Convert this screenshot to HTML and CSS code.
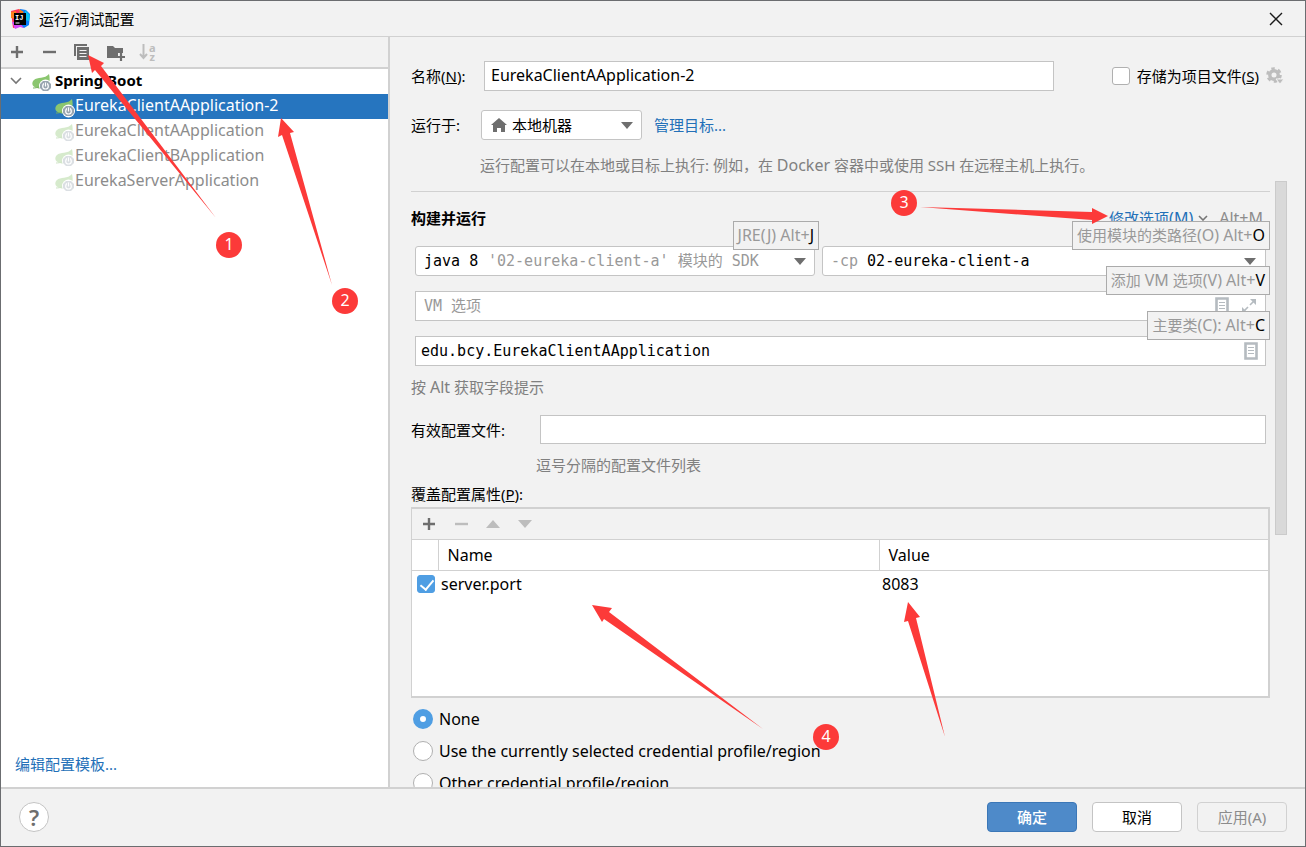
FILE: index.html
```html
<!DOCTYPE html>
<html lang="zh-CN">
<head>
<meta charset="utf-8">
<title>运行/调试配置</title>
<link rel="stylesheet" href="styles.css">
</head>
<body>
<svg class="defs" aria-hidden="true">
  <symbol id="plus" viewBox="0 0 16 16"><path d="M8 2v12M2 8h12" stroke="currentColor" stroke-width="2.4"/></symbol>
  <symbol id="minus" viewBox="0 0 16 16"><path d="M2 8h13" stroke="currentColor" stroke-width="2.4"/></symbol>
  <symbol id="down" viewBox="0 0 12 8"><path d="M0 1h12L6 8z" fill="currentColor"/></symbol>
  <symbol id="doc" viewBox="0 0 14 18"><path d="M1.500 1.500h11v15h-11z" fill="#fff" stroke="#b5bbc0" stroke-width="2.600"/><path d="M4 5.500h6M4 8.500h6M4 11.500h6" stroke="#b5bbc0"/></symbol>
  <symbol id="spring" viewBox="0 0 20 20">
    <path d="M17 1c1 4 1 8-1 11-3 4-8 4-11 3-5-1-6-5-3-8 3-3 11-1 15-6z" fill="#8bc66f"/>
    <path d="M1 15c5 0 9-2 12-6" fill="none" stroke="#79b25e"/>
    <circle class="cut" cx="13.500" cy="13" r="6.500"/>
    <path d="M11 8h5l3 3v4l-3 3h-5l-3-3v-4z" fill="#99a5b0"/>
    <circle cx="13.500" cy="13.200" r="2.800" fill="none" stroke="#fff" stroke-width="1.200"/>
    <path d="M13.500 10v3" stroke="#99a5b0" stroke-width="3"/><path d="M13.500 9.500v4" stroke="#fff" stroke-width="1.200"/>
  </symbol>
</svg>

<div class="dialog">
  <header class="titlebar">
    <svg class="logo" viewBox="0 0 20 20" aria-hidden="true">
      <path d="M1 2l8-2 4 5-5 13-5 1z" fill="#fe315d"/><path d="M1 3l5-1v8l-5-1z" fill="#fc801d"/>
      <path d="M10 0l6 1 4 4-1 11-5 3-6-3z" fill="#087cfa"/><path d="M15 1l5 5-1 6-4-1z" fill="#07c3f2"/>
      <path d="M2 13h7l5 6-4-1-5 2z" fill="#d249fc"/><path d="M9 0l5 3-4 3z" fill="#f97a12"/>
      <path d="M4 4h12v12H4z" fill="#000"/><path d="M5.500 14h4" stroke="#fff"/>
      <text x="5" y="10.500" class="logo-text">IJ</text>
    </svg>
    <h1>运行/调试配置</h1>
    <button class="icon-btn close" aria-label="关闭"><svg width="14" height="14" viewBox="0 0 14 14"><path d="M1 1l12 12M13 1L1 13" stroke="#1a1a1a" stroke-width="1.400"/></svg></button>
  </header>

  <div class="body">
    <aside class="sidebar">
      <div class="toolbar">
        <button class="icon-btn" aria-label="添加"><svg width="16" height="16"><use href="#plus"/></svg></button>
        <button class="icon-btn" aria-label="删除"><svg width="16" height="16"><use href="#minus"/></svg></button>
        <button class="icon-btn" aria-label="复制"><svg width="18" height="18" viewBox="0 0 18 18"><path d="M2 13V2h12" fill="none" stroke="#6e6e6e" stroke-width="2"/><path d="M4 4h12v13H4z" fill="#6e6e6e"/><path d="M6.500 7.500h7M6.500 10.500h7M6.500 13.500h7" stroke="#f2f2f2"/></svg></button>
        <button class="icon-btn" aria-label="新建文件夹"><svg width="18" height="18" viewBox="0 0 18 18"><path d="M0 3h6l2 2h8v5h-5v5H0z" fill="#6e6e6e"/><path d="M14 10v8M10 14h8" stroke="#6e6e6e" stroke-width="2.200"/></svg></button>
        <button class="icon-btn sort" aria-label="排序" disabled><svg width="9" height="18" viewBox="0 0 9 18"><path d="M4.500 1v14M1 11l3.500 4L8 11" fill="none" stroke="#bdbdbd" stroke-width="2"/></svg><span class="az"><span>a</span><span>z</span></span></button>
      </div>
      <ul class="tree">
        <li class="group"><svg class="chevron" width="12" height="8" viewBox="0 0 12 8"><path d="M1 1l5 5 5-5" fill="none" stroke="#767676" stroke-width="1.600"/></svg><svg class="spring"><use href="#spring"/></svg>Spring Boot</li>
        <li class="item selected"><svg class="spring"><use href="#spring"/></svg>EurekaClientAApplication-2</li>
        <li class="item dim"><svg class="spring"><use href="#spring"/></svg>EurekaClientAApplication</li>
        <li class="item dim"><svg class="spring"><use href="#spring"/></svg>EurekaClientBApplication</li>
        <li class="item dim"><svg class="spring"><use href="#spring"/></svg>EurekaServerApplication</li>
      </ul>
      <a class="templates" href="#">编辑配置模板...</a>
    </aside>

    <main class="main">
      <div class="row name-row">
        <label class="lead" for="name">名称(<u>N</u>):</label>
        <input class="field name latin" id="name" type="text" value="EurekaClientAApplication-2">
        <div class="store">
          <input type="checkbox" class="check" id="store"><label for="store">存储为项目文件(<u>S</u>)</label>
          <button class="icon-btn" aria-label="设置"><svg width="18" height="18" viewBox="0 0 18 18"><circle cx="8" cy="8" r="4.200" fill="none" stroke="#bdbdbd" stroke-width="3.400"/><circle cx="8" cy="8" r="6.500" fill="none" stroke="#bdbdbd" stroke-width="2.600" stroke-dasharray="3.400 3.400"/><path d="M10 12h8l-4 5z" fill="#bdbdbd" stroke="#f2f2f2"/></svg></button>
        </div>
      </div>
      <div class="row target-row">
        <label class="lead" for="target">运行于:</label>
        <div class="combo target">
          <svg width="18" height="16" viewBox="0 0 18 16"><path d="M9 1l8 7h-2v7h-4v-4H7v4H3V8H1z" fill="#6e6e6e"/></svg>
          <select id="target"><option>本地机器</option></select>
          <svg class="arrow"><use href="#down"/></svg>
        </div>
        <a href="#">管理目标...</a>
      </div>
      <p class="hint target-hint">运行配置可以在本地或目标上执行: 例如，在 <span class="latin">Docker</span> 容器中或使用 SSH 在远程主机上执行。</p>

      <div class="scroll">
        <div class="content">
          <div class="section-head">
            <h2>构建并运行</h2>
            <div class="modify"><a href="#">修改选项<span class="latin">(M)</span></a><svg width="10" height="6" viewBox="0 0 10 6"><path d="M1 1l4 4 4-4" fill="none" stroke="#767676" stroke-width="1.600"/></svg><span class="keys latin">Alt+M</span></div>
          </div>
          <div class="build">
            <div class="combo mono jre">
              <select aria-label="JRE"><option>java 8</option></select><span class="gray">'02-eureka-client-a' 模块的 SDK</span>
              <svg class="arrow"><use href="#down"/></svg>
              <span class="tip"><span class="latin">JRE(J) Alt+<b>J</b></span></span>
            </div>
            <div class="combo mono cp">
              <label class="gray" for="cp">-cp</label><select id="cp"><option>02-eureka-client-a</option></select>
              <svg class="arrow"><use href="#down"/></svg>
              <span class="tip">使用模块的类路径<span class="latin">(O) Alt+<b>O</b></span></span>
            </div>
            <div class="box mono wide">
              <input type="text" placeholder="VM 选项" aria-label="VM 选项">
              <svg width="14" height="18"><use href="#doc"/></svg>
              <svg width="16" height="16" viewBox="0 0 16 16"><path d="M9 7l5-5M7 9l-5 5" stroke="#b5bbc0" stroke-width="1.600"/><path d="M9 1h6v6zM1 9v6h6z" fill="#b5bbc0"/></svg>
              <span class="tip">添加 <span class="latin">VM</span> 选项<span class="latin">(V) Alt+<b>V</b></span></span>
            </div>
            <div class="box mono wide class-box">
              <input type="text" value="edu.bcy.EurekaClientAApplication" aria-label="主要类">
              <svg width="14" height="18"><use href="#doc"/></svg>
              <span class="tip">主要类<span class="latin">(C): Alt+<b>C</b></span></span>
            </div>
          </div>
          <p class="hint alt-hint">按 <span class="latin">Alt</span> 获取字段提示</p>
          <div class="row profiles">
            <label for="profiles">有效配置文件:</label><input class="field" id="profiles" type="text">
          </div>
          <p class="hint profile-hint">逗号分隔的配置文件列表</p>
          <p class="props-label">覆盖配置属性(<u>P</u>):</p>
          <div class="props">
            <div class="props-bar">
              <button class="icon-btn" aria-label="添加属性"><svg width="16" height="16"><use href="#plus"/></svg></button>
              <button class="icon-btn faint" aria-label="删除属性"><svg width="16" height="16"><use href="#minus"/></svg></button>
              <button class="icon-btn faint" aria-label="上移"><svg width="16" height="8" viewBox="0 0 16 8"><path d="M1 8h14L8 0z" fill="currentColor"/></svg></button>
              <button class="icon-btn faint" aria-label="下移"><svg width="16" height="8" viewBox="0 0 16 8"><path d="M1 0h14L8 8z" fill="currentColor"/></svg></button>
            </div>
            <table>
              <thead><tr><th class="tick"></th><th class="key">Name</th><th>Value</th></tr></thead>
              <tbody><tr><td class="tick"><input type="checkbox" class="check" checked aria-label="server.port"></td><td>server.port</td><td>8083</td></tr></tbody>
            </table>
          </div>
          <div class="radios">
            <label><input type="radio" name="cred" checked>None</label>
            <label><input type="radio" name="cred">Use the currently selected credential profile/region</label>
            <label><input type="radio" name="cred">Other credential profile/region</label>
          </div>
        </div>
        <div class="thumb"></div>
      </div>
    </main>
  </div>

  <footer class="footer">
    <button class="help" aria-label="帮助">?</button>
    <button class="btn primary">确定</button>
    <button class="btn">取消</button>
    <button class="btn" disabled>应用(A)</button>
  </footer>
</div>

<svg class="marks" width="1306" height="847" viewBox="0 0 1306 847" aria-hidden="true">
  <g fill="#fc3a39">
    <path d="M88 55L104 63L101 66L216 218L95 70L92 73z"/>
    <path d="M281 118L294 132L290 133L332 285L282 135L278 137z"/>
    <path d="M1108 216L1092 208V212L920 207L1092 220V224z"/>
    <path d="M592 605L612 608L609 612L763 729L604 619L602 622z"/>
    <path d="M908 602L920 617L916 618L945 737L908 621L904 622z"/>
    <circle cx="229" cy="245" r="13"/><circle cx="345" cy="301" r="13"/><circle cx="904" cy="203" r="13"/><circle cx="826" cy="737" r="13"/>
  </g>
  <g class="mark-num"><text x="229" y="250">1</text><text x="345" y="306">2</text><text x="904" y="208">3</text><text x="826" y="742">4</text></g>
</svg>
</body>
</html>
```
FILE: styles.css
```css
* { box-sizing: border-box; }
body, h1, h2, p, ul { margin: 0; padding: 0; }
body, input, select, button {
  font-family: "Noto Sans", "Noto Sans CJK SC", sans-serif;
  font-size: 15px;
  line-height: 20px;
  color: #000;
}
a { color: #2370b8; text-decoration: none; }
button { padding: 0; cursor: pointer; }
svg { flex: none; display: block; }
.defs { position: absolute; width: 0; height: 0; }
.latin, .tree, table, .radios { font-size: 16px; }
.hint, .modify a, .tip { line-height: 20px; }
.hint .latin, .modify .latin, .tip .latin { line-height: 16px; }

.dialog {
  display: flex;
  flex-direction: column;
  height: 100vh;
  background: #f2f2f2;
  border: 1px solid #6b6d70;
}
.titlebar {
  display: flex;
  align-items: center;
  gap: 9px;
  height: 36px;
  padding: 0 22px 0 9px;
  border-bottom: 1px solid #d1d1d1;
}
.titlebar h1 { font-size: 15px; font-weight: 400; }
.logo { width: 20px; height: 20px; }
.logo-text { font: 700 7px "Liberation Mono", monospace; fill: #fff; }
.icon-btn { display: flex; background: none; border: 0; color: #6e6e6e; }
.icon-btn.faint { color: #bdbdbd; }
.az { display: flex; flex-direction: column; font-size: 11px; font-weight: 700; line-height: 9px; color: #bdbdbd; }
.close { margin-left: auto; }

.body { flex: 1; display: flex; min-height: 0; }
.sidebar {
  display: flex;
  flex-direction: column;
  width: 389px;
  background: #fff;
  border-right: 2px solid #d1d1d1;
}
.toolbar {
  display: flex;
  align-items: center;
  gap: 16px;
  height: 32px;
  padding: 0 8px;
  background: #f2f2f2;
  border-bottom: 2px solid #d1d1d1;
}
.sort { gap: 1px; margin-left: -2px; }
.tree { list-style: none; flex: 1; line-height: 22px; }
.tree li { display: flex; align-items: flex-start; height: 25px; white-space: nowrap; }
.group { padding-left: 9px; font-weight: 700; font-size: 15px; }
.chevron { margin: 8px 10px 0 0; }
.spring { width: 20px; height: 20px; margin-top: 4px; }
.group .spring { margin-right: 3px; }
.cut { fill: #fff; }
.item { padding-left: 54px; }
.item.dim { color: #8c8c8c; }
.item.dim .spring { opacity: 0.35; }
.item.selected { background: #2675bf; color: #fff; }
.item.selected .cut { fill: #2675bf; }
.templates { padding: 0 14px 13px; }

.main { flex: 1; display: flex; flex-direction: column; min-width: 0; padding: 24px 18px 0 21px; }
.row { display: flex; align-items: center; }
.lead { width: 70px; }
.field {
  height: 30px;
  padding: 0 6px 2px;
  background: #fff;
  border: 1px solid #c4c4c4;
  outline: 0;
}
.name { flex: 1; min-width: 0; margin-left: 3px; }
.store { display: flex; align-items: center; gap: 7px; margin-left: 58px; margin-right: 3px; }
.check {
  appearance: none;
  width: 18px;
  height: 18px;
  margin: 0;
  background: #fff;
  border: 1px solid #b0b0b0;
  border-radius: 3px;
}
.check:checked { background: #4f9ee3; border-color: #4f9ee3; }
.check:checked::after {
  content: "";
  display: block;
  width: 6px;
  height: 11px;
  margin: 1px 5px;
  border: solid #fff;
  border-width: 0 2px 2px 0;
  transform: rotate(40deg);
}
.target-row { margin-top: 19px; }
.combo, .box {
  position: relative;
  display: flex;
  align-items: center;
  height: 30px;
  background: #fff;
  border: 1px solid #c4c4c4;
}
.combo { padding: 0 8px; border-radius: 3px; }
.combo select {
  appearance: none;
  padding: 0;
  background: none;
  border: 0;
  outline: 0;
}
.arrow { width: 12px; height: 8px; margin-left: auto; color: #6e6e6e; }
.target { width: 161px; gap: 4px; margin-right: 12px; }
.hint { color: #808080; white-space: nowrap; }
.target-hint { margin: 15px 0 16px 69px; }

.scroll { flex: 1; display: flex; min-height: 0; margin-top: -10px; padding-top: 10px; overflow: hidden; }
.content { flex: 1; min-width: 0; border-top: 1px solid #d1d1d1; }
.thumb { width: 12px; height: 354px; margin: -10px 0 0 5px; background: #d9d9d9; border: 1px solid #cbcbcb; }
.section-head { display: flex; justify-content: space-between; align-items: center; padding: 16px 7px 18px 0; }
.section-head h2 { font-size: 15px; font-weight: 700; }
.modify { display: flex; align-items: center; gap: 5px; color: #8c8c8c; }
.keys { margin-left: 6px; }
.build { display: grid; grid-template-columns: 400px 1fr; gap: 15px 7px; padding: 0 4px; }
.wide { grid-column: 1 / -1; }
.mono, .mono input, .mono select { font-family: "DejaVu Sans Mono", "Noto Sans CJK SC", monospace; }
.gray { color: #999; white-space: nowrap; }
.jre, .cp { gap: 9px; }
.cp .arrow { margin-right: 1px; }
.box { padding: 0 8px; gap: 12px; }
.box input { flex: 1; min-width: 0; padding: 0; border: 0; outline: 0; background: none; }
.box input::placeholder { color: #999; }
.class-box { padding: 0 7px 0 5px; }
.tip {
  position: absolute;
  right: -5px;
  bottom: 25px;
  z-index: 1;
  height: 29px;
  padding: 3px 4px;
  font-family: "Noto Sans", "Noto Sans CJK SC", sans-serif;
  color: #999;
  white-space: nowrap;
  background: #f2f2f2;
  border: 1px solid #ababab;
}
.tip b { font-weight: 400; color: #000; }
.alt-hint { margin-top: 11px; }
.profiles { margin-top: 18px; padding-right: 4px; }
.profiles label { width: 129px; }
.profiles .field { flex: 1; min-width: 0; height: 29px; }
.profile-hint { margin: 11px 0 0 125px; }
.props-label { margin: 9px 0 3px; }
.props { height: 191px; background: #fff; border: 2px solid #d1d1d1; border-left-width: 1px; }
.props-bar {
  display: flex;
  align-items: center;
  gap: 16px;
  height: 31px;
  padding: 0 9px;
  background: #f2f2f2;
  border-bottom: 1px solid #d1d1d1;
}
table { width: 100%; border-collapse: collapse; table-layout: fixed; }
th { height: 30px; padding: 0 9px; font-weight: 400; text-align: left; border-bottom: 1px solid #d1d1d1; border-right: 1px solid #d1d1d1; }
th:last-child { border-right: 0; }
th.tick { width: 26px; }
th.key { width: 441px; }
td { height: 27px; padding: 0 3px; }
td.tick { padding: 0 0 0 5px; }
td.tick .check { display: block; }
.radios { display: flex; flex-direction: column; gap: 12px; margin-top: 11px; }
.radios label { display: flex; align-items: center; gap: 6px; padding-left: 2px; height: 20px; }
.radios input {
  appearance: none;
  width: 20px;
  height: 20px;
  margin: 0;
  background: #fff;
  border: 1px solid #b0b0b0;
  border-radius: 50%;
}
.radios input:checked { border: 7px solid #4f9ee3; }

.footer {
  display: flex;
  align-items: center;
  gap: 15px;
  height: 59px;
  padding: 0 18px 1px;
  border-top: 2px solid #d1d1d1;
}
.help {
  width: 30px;
  height: 30px;
  margin-right: auto;
  font-size: 22px;
  font-weight: 600;
  color: #6e6e6e;
  background: #fff;
  border: 1px solid #c4c4c4;
  border-radius: 50%;
}
.btn { width: 90px; height: 30px; background: #fff; border: 1px solid #c4c4c4; border-radius: 4px; }
.btn.primary { color: #fff; font-weight: 500; background: #4e8ac9; border-color: #3b77b7; }
.btn:disabled { color: #8c8c8c; background: #f2f2f2; border-color: #d1d1d1; }

.marks { position: absolute; top: 0; left: 0; z-index: 2; pointer-events: none; }
.mark-num text { font: 16px "Noto Sans", sans-serif; fill: #fff; text-anchor: middle; }
```
